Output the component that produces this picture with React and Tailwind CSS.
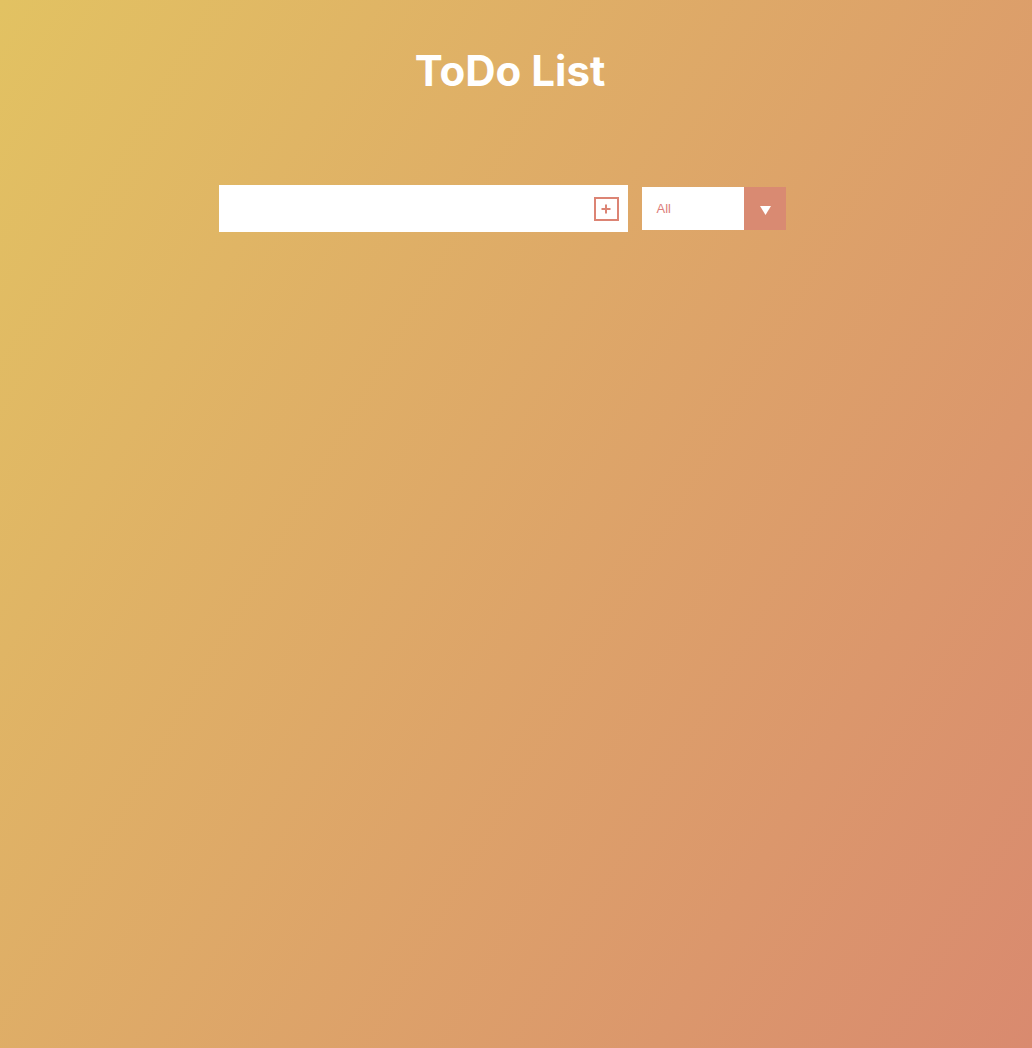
export default function App() {
  return (
    <div
      className="min-h-[1048px] w-full bg-[linear-gradient(120deg,#e2c262_0%,#d98a6f_100%)] pr-[12px]"
      style={{ fontFamily: "Inter, 'Liberation Sans', sans-serif" }}
    >
      <header className="flex justify-center pt-[45px]">
        <h1 className="text-[42px] leading-[52px] font-bold text-white">ToDo List</h1>
      </header>
      <div className="mt-[88px] flex justify-center items-center">
        <div className="flex items-center">
          <div className="w-[409px] h-[47px] bg-white flex items-center justify-end pr-[9px]">
            <div className="w-[25px] h-[24px] border-2 border-[#dc8474] flex items-center justify-center">
              <svg width="12" height="12" viewBox="0 0 12 12">
                <rect x="5" y="1.5" width="2" height="9" fill="#dc8474" />
                <rect x="1.5" y="5" width="9" height="2" fill="#dc8474" />
              </svg>
            </div>
          </div>
          <div className="ml-[14px] mr-[16px] w-[144px] h-[43px] bg-white flex items-center">
            <span
              className="flex-1 pl-[15px] text-[13px] text-[#dc7e7a]"
              style={{ fontFamily: "'Liberation Sans', Arial, sans-serif" }}
            >
              All
            </span>
            <div className="w-[42px] h-full bg-[#d98a72] flex items-center justify-center pt-[3px] pl-[1px]">
              <svg width="11" height="9" viewBox="0 0 11 9">
                <polygon points="0,0 11,0 5.5,9" fill="white" />
              </svg>
            </div>
          </div>
        </div>
      </div>
    </div>
  );
}
